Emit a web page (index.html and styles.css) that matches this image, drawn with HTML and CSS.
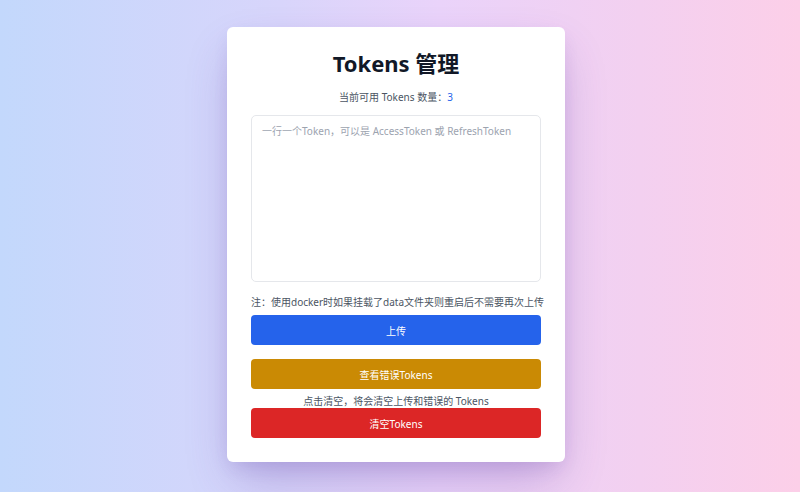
FILE: index.html
```html
<!DOCTYPE html>
<html lang="zh-CN">
<head>
<meta charset="utf-8">
<title>Tokens 管理</title>
<link rel="stylesheet" href="styles.css">
</head>
<body>
<main class="page">
  <section class="card">
    <h1 class="title">Tokens 管理</h1>
    <p class="count">当前可用 Tokens 数量：<span class="num">3</span></p>
    <textarea class="input" placeholder="一行一个Token，可以是 AccessToken 或 RefreshToken"></textarea>
    <p class="note">注：使用docker时如果挂载了data文件夹则重启后不需要再次上传</p>
    <button class="btn btn-blue">上传</button>
    <button class="btn btn-yellow">查看错误Tokens</button>
    <p class="hint">点击清空，将会清空上传和错误的 Tokens</p>
    <button class="btn btn-red">清空Tokens</button>
  </section>
</main>
</body>
</html>
```

FILE: styles.css
```css
* { box-sizing: border-box; }
html, body { margin: 0; height: 100%; }
body {
  font-family: "Noto Sans", "Noto Sans CJK SC", sans-serif;
  background: linear-gradient(to right, #c3d8fc 0%, #d8d5fb 35%, #ead3fa 55%, #f3d0f0 80%, #fccfe8 100%);
  color: #1f2937;
}
.page {
  height: 100%;
  display: flex;
  justify-content: center;
  align-items: flex-start;
  padding-top: 27px;
  padding-right: 8px;
}
.card {
  width: 338px;
  background: #fff;
  border-radius: 6px;
  padding: 21px 24px 24px;
  display: flex;
  flex-direction: column;
  box-shadow: 0 22px 44px -8px rgba(90, 60, 160, 0.32), 0 8px 18px -4px rgba(90, 60, 160, 0.14);
}
.title {
  margin: 0;
  font-size: 22px;
  line-height: 30px;
  font-weight: 700;
  text-align: center;
  color: #111827;
}
.count {
  margin: 12px 0 0;
  font-size: 10px;
  line-height: 14px;
  text-align: center;
  color: #4b5563;
}
.num { color: #2563eb; }
.input {
  margin-top: 11px;
  height: 167px;
  width: 100%;
  resize: none;
  border: 1px solid #e5e7eb;
  border-radius: 5px;
  padding: 8px 10px;
  font-family: inherit;
  font-size: 10px;
  line-height: 14px;
  color: #374151;
  outline: none;
}
.input::placeholder { color: #9ca3af; }
.note {
  margin: 13px 0 0;
  font-size: 10px;
  line-height: 14px;
  color: #4b5563;
  white-space: nowrap;
}
.hint {
  margin: 5px 0 0;
  font-size: 10px;
  line-height: 14px;
  text-align: center;
  color: #4b5563;
}
.btn {
  height: 30px;
  width: 100%;
  border: none;
  border-radius: 4px;
  color: #fff;
  font-family: inherit;
  font-size: 10px;
  cursor: pointer;
}
.btn-blue { background: #2563eb; margin-top: 6px; }
.btn-yellow { background: #ca8a04; margin-top: 14px; }
.btn-red { background: #dc2626; margin-top: 0; }
```
